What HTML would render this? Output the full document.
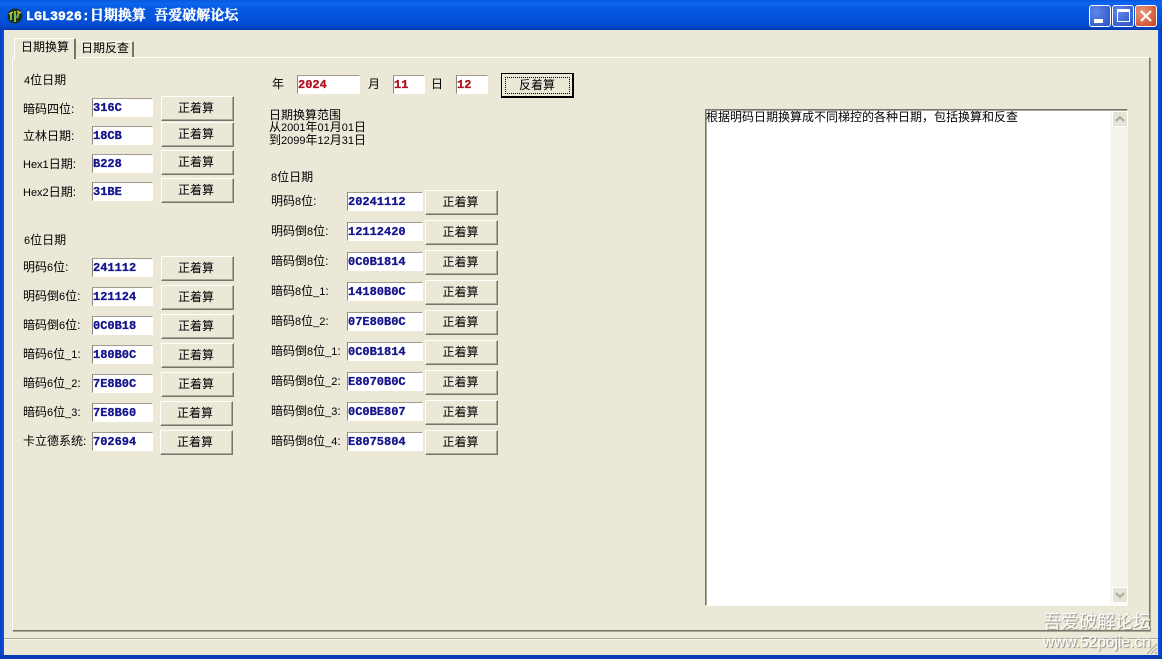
<!DOCTYPE html>
<html><head><meta charset="utf-8"><style>
html,body{margin:0;padding:0;width:1162px;height:659px;overflow:hidden;background:#ebe8d8}
*{box-sizing:border-box}
body{position:relative;font:12px/14px "Liberation Sans","Noto Sans CJK SC",sans-serif;color:#000}
div{position:absolute;white-space:nowrap}
.l{height:14px}
i{font-style:normal;font-size:11px}
.i{background:#fff;border:1px solid;border-color:#a09d8e #fff #fff #8a8778;font:bold 12px/18px "Liberation Mono",monospace;color:#14148c;padding-left:0;overflow:hidden;-webkit-text-stroke:.3px currentColor}
.b{background:#ebe8d8;border:1px solid;border-color:#fffffb #77756a #77756a #fffffb;box-shadow:inset -1px -1px 0 #aca899;text-align:center;line-height:23px;font-size:12px;padding-right:2px}
.lb{padding-right:3px}
.wb{width:22px;height:22px;top:5px;border:1px solid #fff;border-radius:3px;background:radial-gradient(circle at 30% 30%,#5d86e8,#2b50c4)}
</style></head><body>
<div style="left:0;top:0;width:1162px;height:30px;background:linear-gradient(#0a56d8 0,#0a5ee8 4%,#0d66ee 12%,#0558e2 30%,#0450d8 70%,#0448cc 90%,#0338a8 100%)"></div>
<div style="left:0;top:30px;width:4px;height:629px;background:linear-gradient(90deg,#0a3cc0,#0855e0)"></div>
<div style="left:1158px;top:30px;width:4px;height:629px;background:linear-gradient(90deg,#0855e0,#0a3cc0)"></div>
<div style="left:0;top:655px;width:1162px;height:4px;background:#0a3cb8"></div>

<svg style="position:absolute;left:7px;top:8px" width="16" height="16" viewBox="0 0 16 16"><circle cx="8" cy="8" r="7.5" fill="#1c3020"/><path d="M4 5v7M8 3v11M12 4l-2 6" stroke="#7cc048" stroke-width="2" fill="none"/><path d="M2 6l4-2M10 3l4 2" stroke="#e8c040" stroke-width="1.5"/></svg>
<div style="left:26px;top:9px;height:16px;color:#fff;font:bold 14px/16px 'Liberation Mono','Noto Serif CJK SC',serif;-webkit-text-stroke:.4px #fff"><span style="font-size:13.3px">LGL3926:</span>日期换算 吾爱破解论坛</div>

<div class="wb" style="left:1089px"><div style="left:4px;top:13px;width:9px;height:4px;background:#fff"></div></div>
<div class="wb" style="left:1112px"><div style="left:4px;top:3px;width:13px;height:13px;border:1px solid #fff;border-top-width:3px"></div></div>
<div class="wb" style="left:1135px;background:radial-gradient(circle at 30% 30%,#e8987c,#c8401c)"><svg style="position:absolute;left:3px;top:3px" width="14" height="14"><path d="M2 2l10 10M12 2L2 12" stroke="#fff" stroke-width="2.2"/></svg></div>

<!-- tab pane -->
<div style="left:12px;top:57px;width:1138px;height:574px;border:1px solid;border-color:#fffffb #77756a #77756a #fffffb;box-shadow:1px 1px 0 #aca899"></div>
<div style="left:14px;top:38px;width:62px;height:21px;background:#ebe8d8;border-top:1px solid #fffffb;border-left:1px solid #fffffb;border-right:2px solid #77756a;border-radius:2px 2px 0 0"></div>
<div style="left:21px;top:40px" class="l">日期换算</div>
<div style="left:77px;top:41px;width:57px;height:16px;border-top:1px solid #fffffb;border-right:2px solid #77756a;border-radius:2px 2px 0 0"></div>
<div style="left:81px;top:41px" class="l">日期反查</div>

<!-- status bar -->
<div style="left:4px;top:638px;width:1154px;height:1px;background:#aca899"></div>
<div style="left:4px;top:639px;width:1154px;height:1px;background:#f8f6ea"></div>

<!-- left col -->
<div class="l" style="left:24px;top:73px"><i>4</i>位日期</div>
<div class="l" style="left:23px;top:102px">暗码四位:</div><div class="i" style="left:92px;top:98px;width:61px;height:19px">316C</div><div class="b lb" style="left:161px;top:96px;width:73px;height:25px">正着算</div>
<div class="l" style="left:23px;top:129px">立林日期:</div><div class="i" style="left:92px;top:126px;width:61px;height:19px">18CB</div><div class="b lb" style="left:161px;top:122px;width:73px;height:25px">正着算</div>
<div class="l" style="left:23px;top:157px"><i>Hex1</i>日期:</div><div class="i" style="left:92px;top:154px;width:61px;height:19px">B228</div><div class="b lb" style="left:161px;top:150px;width:73px;height:25px">正着算</div>
<div class="l" style="left:23px;top:185px"><i>Hex2</i>日期:</div><div class="i" style="left:92px;top:182px;width:61px;height:19px">31BE</div><div class="b lb" style="left:161px;top:178px;width:73px;height:25px">正着算</div>

<div class="l" style="left:24px;top:233px"><i>6</i>位日期</div>
<div class="l" style="left:23px;top:260px">明码<i>6</i>位:</div><div class="i" style="left:92px;top:258px;width:61px;height:19px">241112</div><div class="b lb" style="left:161px;top:256px;width:73px;height:25px">正着算</div>
<div class="l" style="left:23px;top:289px">明码倒<i>6</i>位:</div><div class="i" style="left:92px;top:287px;width:61px;height:19px">121124</div><div class="b lb" style="left:161px;top:285px;width:73px;height:25px">正着算</div>
<div class="l" style="left:23px;top:318px">暗码倒<i>6</i>位:</div><div class="i" style="left:92px;top:316px;width:61px;height:19px">0C0B18</div><div class="b lb" style="left:161px;top:314px;width:73px;height:25px">正着算</div>
<div class="l" style="left:23px;top:347px">暗码<i>6</i>位<i>_1</i>:</div><div class="i" style="left:92px;top:345px;width:61px;height:19px">180B0C</div><div class="b lb" style="left:161px;top:343px;width:73px;height:25px">正着算</div>
<div class="l" style="left:23px;top:376px">暗码<i>6</i>位<i>_2</i>:</div><div class="i" style="left:92px;top:374px;width:61px;height:19px">7E8B0C</div><div class="b lb" style="left:161px;top:372px;width:73px;height:25px">正着算</div>
<div class="l" style="left:23px;top:405px">暗码<i>6</i>位<i>_3</i>:</div><div class="i" style="left:92px;top:403px;width:61px;height:19px">7E8B60</div><div class="b lb" style="left:160px;top:401px;width:73px;height:25px">正着算</div>
<div class="l" style="left:23px;top:434px">卡立德系统:</div><div class="i" style="left:92px;top:432px;width:61px;height:19px">702694</div><div class="b lb" style="left:160px;top:430px;width:73px;height:25px">正着算</div>

<!-- top row -->
<div class="l" style="left:272px;top:77px">年</div><div class="i" style="left:297px;top:75px;width:63px;height:19px;color:#b01020">2024</div>
<div class="l" style="left:368px;top:77px">月</div><div class="i" style="left:393px;top:75px;width:32px;height:19px;color:#b01020">11</div>
<div class="l" style="left:431px;top:77px">日</div><div class="i" style="left:456px;top:75px;width:32px;height:19px;color:#b01020">12</div>
<div class="b" style="left:501px;top:73px;width:73px;height:25px;border:1px solid #000;border-right-width:2px;border-bottom-width:2px;box-shadow:none;line-height:22px;padding:0">反着算<div style="left:3px;top:3px;width:65px;height:17px;border:1px dotted #000"></div></div>

<div style="left:269px;top:109px;line-height:12px">日期换算范围<br>从<i>2001</i>年<i>01</i>月<i>01</i>日<br>到<i>2099</i>年<i>12</i>月<i>31</i>日</div>

<div class="l" style="left:271px;top:170px"><i>8</i>位日期</div>
<div class="l" style="left:271px;top:194px">明码<i>8</i>位:</div><div class="i" style="left:347px;top:192px;width:76px;height:19px">20241112</div><div class="b" style="left:425px;top:190px;width:73px;height:25px">正着算</div>
<div class="l" style="left:271px;top:224px">明码倒<i>8</i>位:</div><div class="i" style="left:347px;top:222px;width:76px;height:19px">12112420</div><div class="b" style="left:425px;top:220px;width:73px;height:25px">正着算</div>
<div class="l" style="left:271px;top:254px">暗码倒<i>8</i>位:</div><div class="i" style="left:347px;top:252px;width:76px;height:19px">0C0B1814</div><div class="b" style="left:425px;top:250px;width:73px;height:25px">正着算</div>
<div class="l" style="left:271px;top:284px">暗码<i>8</i>位<i>_1</i>:</div><div class="i" style="left:347px;top:282px;width:76px;height:19px">14180B0C</div><div class="b" style="left:425px;top:280px;width:73px;height:25px">正着算</div>
<div class="l" style="left:271px;top:314px">暗码<i>8</i>位<i>_2</i>:</div><div class="i" style="left:347px;top:312px;width:76px;height:19px">07E80B0C</div><div class="b" style="left:425px;top:310px;width:73px;height:25px">正着算</div>
<div class="l" style="left:271px;top:344px">暗码倒<i>8</i>位<i>_1</i>:</div><div class="i" style="left:347px;top:342px;width:76px;height:19px">0C0B1814</div><div class="b" style="left:425px;top:340px;width:73px;height:25px">正着算</div>
<div class="l" style="left:271px;top:374px">暗码倒<i>8</i>位<i>_2</i>:</div><div class="i" style="left:347px;top:372px;width:76px;height:19px">E8070B0C</div><div class="b" style="left:425px;top:370px;width:73px;height:25px">正着算</div>
<div class="l" style="left:271px;top:404px">暗码倒<i>8</i>位<i>_3</i>:</div><div class="i" style="left:347px;top:402px;width:76px;height:19px">0C0BE807</div><div class="b" style="left:425px;top:400px;width:73px;height:25px">正着算</div>
<div class="l" style="left:271px;top:434px">暗码倒<i>8</i>位<i>_4</i>:</div><div class="i" style="left:347px;top:432px;width:76px;height:19px">E8075804</div><div class="b" style="left:425px;top:430px;width:73px;height:25px">正着算</div>

<!-- memo -->
<div style="left:705px;top:109px;width:423px;height:497px;background:#fff;border:1px solid;border-color:#77756a #fbfaf0 #fbfaf0 #77756a;box-shadow:inset 1px 1px 0 #aca899">
<div style="left:0;top:0">根据明码日期换算成不同梯控的各种日期，包括换算和反查</div>
<div style="left:405px;top:1px;width:17px;height:493px;background:#f5f4ea"></div>
<div style="left:406px;top:1px;width:16px;height:16px;background:#e6e4d6;border:1px solid #fff"><svg width="14" height="14" style="position:absolute;left:0;top:0"><path d="M3 9l4-4 4 4" stroke="#aca899" stroke-width="2" fill="none"/></svg></div>
<div style="left:406px;top:477px;width:16px;height:16px;background:#e6e4d6;border:1px solid #fff"><svg width="14" height="14" style="position:absolute;left:0;top:0"><path d="M3 5l4 4 4-4" stroke="#aca899" stroke-width="2" fill="none"/></svg></div>
</div>

<!-- watermark -->
<div style="left:1043px;top:611px;color:#fff;font-size:18px;line-height:22px;text-shadow:1px 1px 1px #8a8778">吾爱破解论坛</div>
<div style="left:1043px;top:634px;color:#fff;font-size:15.5px;line-height:18px;text-shadow:1px 1px 1px #8a8778">www.52pojie.cn</div>
<svg style="position:absolute;left:1146px;top:642px" width="12" height="13"><path d="M11 2L1 12M11 6l-6 6M11 10l-2 2" stroke="#aca899" stroke-width="1"/></svg>
</body></html>
